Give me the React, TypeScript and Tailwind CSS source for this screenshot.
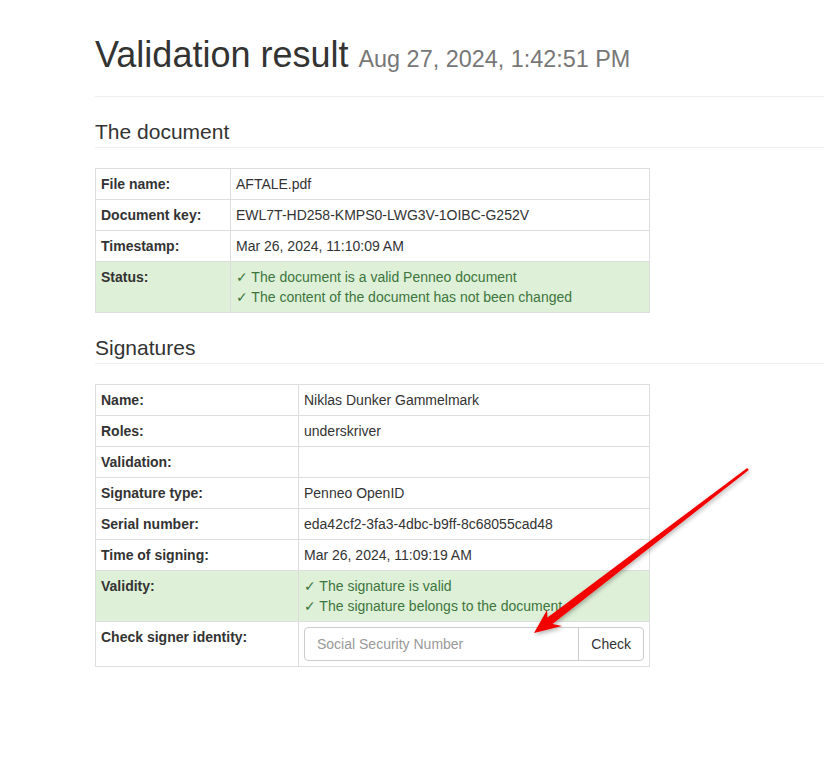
import type { ReactNode } from 'react';

type Row = {
  label: string;
  value?: ReactNode;
  success?: boolean;
};

const documentRows: Row[] = [
  { label: 'File name:', value: 'AFTALE.pdf' },
  { label: 'Document key:', value: 'EWL7T-HD258-KMPS0-LWG3V-1OIBC-G252V' },
  { label: 'Timestamp:', value: 'Mar 26, 2024, 11:10:09 AM' },
  {
    label: 'Status:',
    success: true,
    value: (
      <>
        <div>✓ The document is a valid Penneo document</div>
        <div>✓ The content of the document has not been changed</div>
      </>
    ),
  },
];

const signatureRows: Row[] = [
  { label: 'Name:', value: 'Niklas Dunker Gammelmark' },
  { label: 'Roles:', value: 'underskriver' },
  { label: 'Validation:', value: '' },
  { label: 'Signature type:', value: 'Penneo OpenID' },
  { label: 'Serial number:', value: 'eda42cf2-3fa3-4dbc-b9ff-8c68055cad48' },
  { label: 'Time of signing:', value: 'Mar 26, 2024, 11:09:19 AM' },
  {
    label: 'Validity:',
    success: true,
    value: (
      <>
        <div>✓ The signature is valid</div>
        <div>✓ The signature belongs to the document</div>
      </>
    ),
  },
];

const InfoTable = ({
  rows,
  labelWidth,
  children,
}: {
  rows: Row[];
  labelWidth: string;
  children?: ReactNode;
}) => (
  <table className="w-[555px] table-fixed border border-[#ddd] text-[14px] leading-[20px]">
    <colgroup>
      <col className={labelWidth} />
      <col />
    </colgroup>
    <tbody>
      {rows.map((row) => (
        <tr
          key={row.label}
          className={row.success ? 'bg-[#dff0d8] text-[#3c763d]' : ''}
        >
          <td className="border border-[#ddd] p-[5px] align-top font-bold text-[#333]">
            {row.label}
          </td>
          <td className="border border-[#ddd] p-[5px] align-top">
            {row.value}
          </td>
        </tr>
      ))}
      {children}
    </tbody>
  </table>
);

const SectionHeading = ({ children }: { children: ReactNode }) => (
  <h3 className="mt-[23px] mb-[20px] border-b border-[#eee] pb-[4px] text-[21px] leading-[23px] text-[#333]">
    {children}
  </h3>
);

const Arrow = () => (
  <svg
    className="pointer-events-none absolute left-0 top-0"
    width="824"
    height="775"
    viewBox="0 0 824 775"
  >
    <defs>
      <filter id="arrowShadow" x="-20%" y="-20%" width="140%" height="140%">
        <feDropShadow dx="1" dy="2" stdDeviation="2" floodColor="#000" floodOpacity="0.3" />
      </filter>
    </defs>
    <polygon
      points="534,633 547,610 547.5,617.5 747.2,468 748.8,470 552.5,624 562,626"
      fill="#f30000"
      filter="url(#arrowShadow)"
    />
  </svg>
);

export default function App() {
  return (
    <div
      className="relative min-h-[775px] w-[824px] overflow-hidden bg-white pl-[95px] text-[#333]"
      style={{ fontFamily: '"Liberation Sans", "DejaVu Sans", sans-serif' }}
    >
      <div className="mt-[35px] border-b border-[#eee] pb-[21px]">
        <h1 className="text-[36px] leading-[40px] text-[#333]">
          Validation result{' '}
          <small className="text-[23.4px] leading-none text-[#777]">
            Aug 27, 2024, 1:42:51 PM
          </small>
        </h1>
      </div>

      <SectionHeading>The document</SectionHeading>
      <InfoTable rows={documentRows} labelWidth="w-[135px]" />

      <SectionHeading>Signatures</SectionHeading>
      <InfoTable rows={signatureRows} labelWidth="w-[203px]">
        <tr>
          <td className="border border-[#ddd] p-[5px] align-top font-bold">
            Check signer identity:
          </td>
          <td className="border border-[#ddd] p-[5px] align-top">
            <div className="flex h-[34px]">
              <input
                type="text"
                placeholder="Social Security Number"
                className="min-w-0 flex-1 rounded-l-[4px] border border-[#ccc] px-[12px] text-[14px] text-[#555] placeholder:text-[#999] focus:outline-none"
              />
              <button
                type="button"
                className="-ml-px rounded-r-[4px] border border-[#ccc] bg-white px-[12px] text-[14px] text-[#333]"
              >
                Check
              </button>
            </div>
          </td>
        </tr>
      </InfoTable>

      <Arrow />
    </div>
  );
}
